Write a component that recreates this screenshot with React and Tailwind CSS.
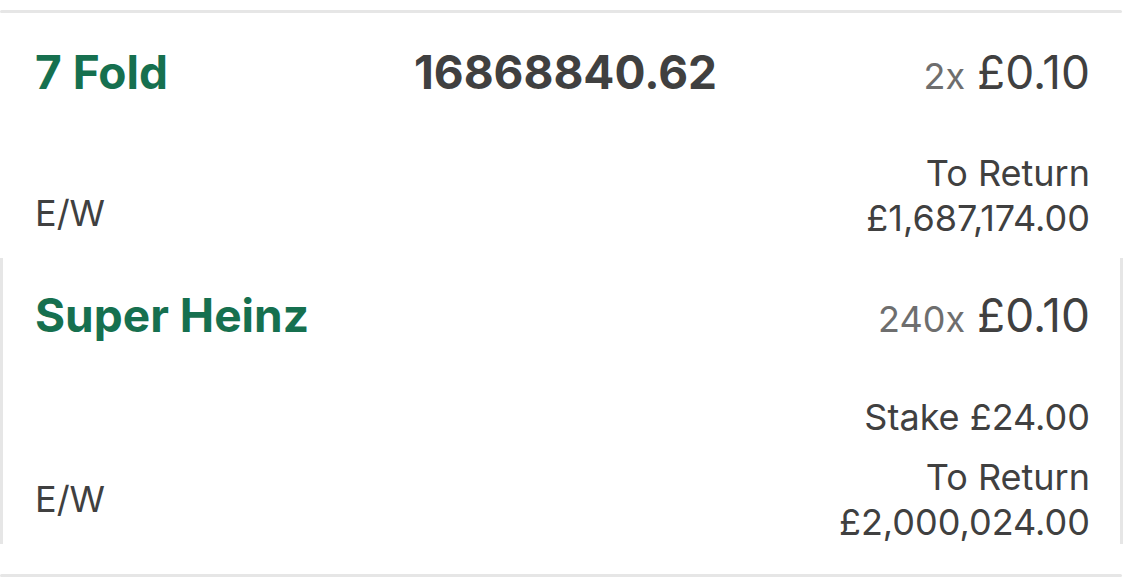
import React from "react";

const font = { fontFamily: "Inter, 'Noto Sans', sans-serif" };

const Divider = () => <div className="h-[3px] w-[1122px] rounded-full bg-[#e6e6e6]" />;

const StakeCell = ({ multiplier, amount }) => (
  <div className="flex items-baseline justify-end gap-[12px] text-[#404040]">
    <span className="text-[36px] text-[#6e6e6e]">{multiplier}</span>
    <span className="text-[46px]">{amount}</span>
  </div>
);

export default function App() {
  return (
    <div className="w-[1125px] h-[585px] bg-white pt-[10px]" style={font}>
      <Divider />

      {/* 7 Fold */}
      <section className="h-[245px] pl-[35px] pr-[35px] pt-[31px]">
        <div className="grid grid-cols-[1fr_auto_1fr] items-baseline leading-[56px]">
          <h2 className="text-[46px] font-bold text-[#16704f]">7 Fold</h2>
          <div className="pl-[6px] text-[46px] font-bold text-[#404040]">16868840.62</div>
          <StakeCell multiplier="2x" amount="£0.10" />
        </div>
        <div className="mt-[47px] flex justify-between items-end text-[36px] leading-[45px] text-[#404040]">
          <span className="mb-[5px]">E/W</span>
          <div className="text-right">
            <div>To Return</div>
            <div>£1,687,174.00</div>
          </div>
        </div>
      </section>

      {/* Super Heinz */}
      <section className="h-[286px] w-[1123px] border-x-[3px] border-[#e6e6e6] pl-[32px] pr-[30px] pt-[29px]">
        <div className="flex justify-between items-baseline leading-[56px]">
          <h2 className="text-[46px] font-bold text-[#16704f]">Super Heinz</h2>
          <StakeCell multiplier="240x" amount="£0.10" />
        </div>
        <div className="mt-[48px] flex justify-between items-end text-[36px] leading-[45px] text-[#404040]">
          <span className="mb-[23px]">E/W</span>
          <div className="text-right">
            <div>Stake £24.00</div>
            <div className="mt-[15px]">To Return</div>
            <div>£2,000,024.00</div>
          </div>
        </div>
      </section>

      <div className="mt-[30px]">
        <Divider />
      </div>
    </div>
  );
}
